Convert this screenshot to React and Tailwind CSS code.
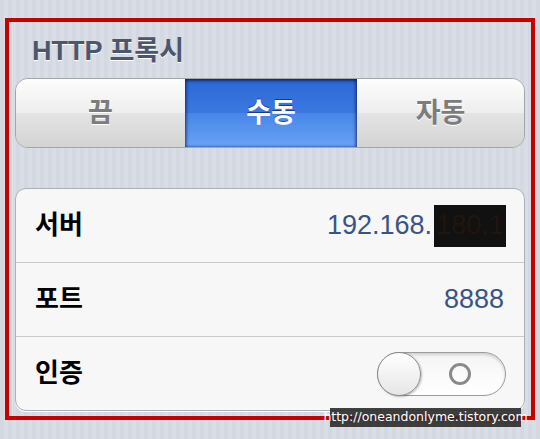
export default function App() {
  const kr = { fontFamily: '"Liberation Sans", "Noto Sans CJK KR", sans-serif' };

  return (
    <div
      className="relative h-[439px] w-[540px] overflow-hidden bg-[repeating-linear-gradient(90deg,#d4d8e0_0px,#d4d8e0_4px,#d9dde5_4px,#d9dde5_8px)] px-[5px] pt-[18px]"
      style={kr}
    >
      <div className="flex h-[402px] w-[530px] flex-col border-4 border-[#c80000] px-[6px]">
        <div className="flex h-[56px] items-center pl-[17px] pt-[2px] text-[27px] font-bold text-[#4c566c] [text-shadow:0_1px_0_#ffffff]">
          HTTP 프록시
        </div>

        <div className="flex h-[70px] overflow-hidden rounded-[13px] border border-[#a3a5a8] text-[27px] font-bold">
          <div className="flex w-[169px] items-center justify-center bg-[linear-gradient(#fdfdfd,#eeeeee_50%,#e4e4e4_50%,#d3d3d3)] text-[#7c7c7c] [text-shadow:0_1px_0_#ffffff]">
            끔
          </div>
          <div className="flex w-[172px] items-center justify-center bg-[linear-gradient(#2c68d6,#3b79e0_50%,#4786e9_50%,#6aa3f4)] text-white shadow-[inset_0_2px_3px_rgba(0,0,60,0.5),inset_2px_0_3px_rgba(0,0,60,0.35),inset_-2px_0_3px_rgba(0,0,60,0.35)] [text-shadow:0_-1px_0_rgba(0,0,80,0.5)]">
            수동
          </div>
          <div className="flex flex-1 items-center justify-center bg-[linear-gradient(#fdfdfd,#eeeeee_50%,#e4e4e4_50%,#d3d3d3)] text-[#7c7c7c] [text-shadow:0_1px_0_#ffffff]">
            자동
          </div>
        </div>

        <div className="mt-[40px] overflow-hidden rounded-[11px] border border-[#abafb6] bg-[#f7f7f7] shadow-[0_1px_0_#ffffff]">
          <div className="flex h-[74px] items-center justify-between border-b border-[#cbcbcb] pl-[19px] pr-[18px]">
            <span className="text-[26px] font-bold text-black">서버</span>
            <span className="flex items-center text-[27px] text-[#385487]">
              192.168.
              <span className="ml-[2px] flex h-[42px] w-[72px] items-center justify-center bg-[#111111] text-[#21150d]">
                180.1
              </span>
            </span>
          </div>
          <div className="flex h-[74px] items-center justify-between border-b border-[#cbcbcb] pl-[19px] pr-[20px]">
            <span className="text-[26px] font-bold text-black">포트</span>
            <span className="text-[27px] text-[#385487]">8888</span>
          </div>
          <div className="flex h-[73px] items-center justify-between pl-[19px] pr-[18px]">
            <span className="text-[26px] font-bold text-black">인증</span>
            <div className="relative flex h-[44px] w-[129px] items-center rounded-full border border-[#9c9c9c] bg-[linear-gradient(#f4f4f4,#fafafa_50%,#ffffff)] shadow-[inset_0_2px_3px_rgba(0,0,0,0.15)]">
              <div className="h-[44px] w-[44px] -ml-px rounded-full border border-[#8d8d8d] bg-[linear-gradient(#ffffff,#e6e6e6)] shadow-[1px_1px_2px_rgba(0,0,0,0.25)]" />
              <div className="ml-[28px] h-[22px] w-[22px] rounded-full border-[3px] border-[#8a8a8a]" />
            </div>
          </div>
        </div>
      </div>

      <div
        className="absolute left-[330px] top-[408px] flex h-[19px] w-[191px] items-center justify-center bg-[#2b2b2b]/90 text-[12.5px] leading-none text-white"
        style={{ fontFamily: '"DejaVu Sans", sans-serif' }}
      >
        http://oneandonlyme.tistory.com
      </div>
    </div>
  );
}
